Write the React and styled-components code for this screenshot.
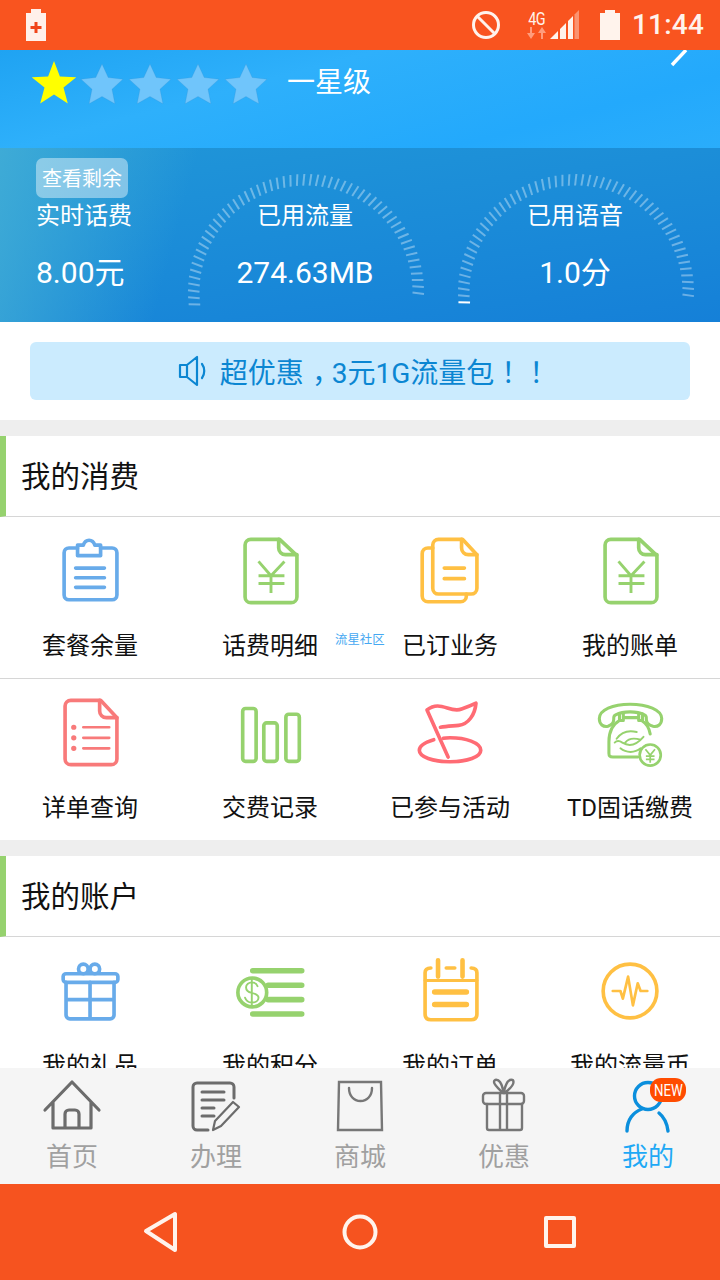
import React from 'react';
import styled, { createGlobalStyle } from 'styled-components';

const Global = createGlobalStyle`
  html, body { margin: 0; padding: 0; background: #fff; }
  body { font-family: Roboto, "Noto Sans CJK SC", sans-serif; }
  * { box-sizing: border-box; }
`;

const Phone = styled.div`
  width: 720px; height: 1280px; display: flex; flex-direction: column; overflow: hidden; background: #eee;
`;
const StatusBar = styled.header`
  height: 50px; flex: none; background: #F9541F; display: flex; align-items: center; justify-content: space-between; padding: 0 16px 0 26px;
`;
const StatusRight = styled.div`display: flex; align-items: center;`;
const FourG = styled.div`
  width: 20px; margin-left: 26px; display: flex; flex-direction: column; align-items: center; color: #FFF3EC;
`;
const FourGText = styled.span`
  font-size: 18px; line-height: 15px; height: 16px; transform: scaleX(.8); letter-spacing: -0.5px;
`;
const Clock = styled.span`
  font-size: 28px; font-weight: 500; color: #FFF3EC; margin-left: 12px; line-height: 50px; letter-spacing: .2px;
`;
const Content = styled.main`flex: 1; min-height: 0; overflow: hidden;`;

const Hero = styled.section`
  position: relative; height: 98px; display: flex; align-items: flex-start; padding: 10px 0 0 32px; gap: 4px;
  background: linear-gradient(165deg, #1FA3F2 0%, #2EB0FB 35%, #23A9FC 75%, #2AADFB 100%);
`;
const Grade = styled.span`
  color: #fff; font-size: 28px; line-height: 46px; margin-left: 15px;
`;
const Chevron = styled.svg`position: absolute; top: 0; right: 30px;`;

const Stats = styled.section`
  height: 174px; display: flex; align-items: stretch;
  background:
    linear-gradient(105deg, rgba(64,172,214,.95) 0, rgba(64,172,214,0) 26%),
    linear-gradient(172deg, #2096D8 0%, #1A8AD8 55%, #1580D8 100%);
`;
const StatFirst = styled.div`
  flex: none; width: 186px; padding: 10px 0 0 36px; display: flex; flex-direction: column; align-items: flex-start;
`;
const Remain = styled.div`
  width: 92px; height: 40px; border-radius: 7px; background: rgba(255,255,255,.42); color: #fff; font-size: 20px; line-height: 42px; text-align: center;
`;
const StatLabel = styled.div`color: #fff; font-size: 24px; line-height: 36px;`;
const StatValue = styled.div`color: #fff; font-size: 30px; line-height: 40px; margin-top: 19px;`;
const Gauge = styled.div`
  position: relative; flex: none; width: 238px; margin-right: 32px; padding-top: 50px; display: flex; flex-direction: column; align-items: center;
`;
const GaugeArc = styled.svg`position: absolute; left: 1px; top: 26px;`;

const NoticeBox = styled.section`background: #fff; padding: 20px 30px; height: 98px;`;
const Notice = styled.div`
  height: 58px; border-radius: 6px; background: #CBEBFE; color: #0B86D2; font-size: 28px; display: flex; align-items: center; justify-content: center; gap: 10px; padding-left: 8px;
`;
const Punct = styled.span`font-family: "Noto Sans CJK TC", sans-serif;`;
const Comma = styled.span`display: inline-block; transform: translateX(.3em);`;

const Section = styled.section`background: #fff; margin-top: 16px;`;
const SectionHead = styled.h2`
  margin: 0; height: 81px; border-left: 6px solid #96D26E; border-bottom: 1px solid #D6D6D6; padding-left: 15px;
  font-weight: 400; font-size: 29.5px; line-height: 83px; color: #111; position: relative;
`;
const Row = styled.div`
  position: relative; display: grid; grid-template-columns: repeat(4, 180px); height: ${p => p.$last ? '161px' : '162px'}; border-bottom: ${p => p.$last ? '0' : '1px solid #D6D6D6'};
`;
const Item = styled.div`display: flex; flex-direction: column; align-items: center; padding-top: 14px;`;
const ItemLabel = styled.span`
  font-size: 24px; line-height: 34px; margin-top: 18px; color: #111; white-space: nowrap;
`;
const Mark = styled.span`
  position: absolute; left: 335px; top: 115px; font-size: 12.4px; line-height: 16px; color: #45A8F2; white-space: nowrap;
`;
const Icon = styled.svg`
  display: block; fill: none; stroke: ${p => p.$c}; stroke-width: ${p => p.$w || 3.8}px; stroke-linecap: round; stroke-linejoin: round;
`;

const TabBar = styled.nav`
  height: 116px; flex: none; background: #F5F5F5; display: grid; grid-template-columns: repeat(5, 144px);
`;
const Tab = styled.div`
  position: relative; display: flex; flex-direction: column; align-items: center; padding-top: 10px;
`;
const TabLabel = styled.span`
  font-size: 26px; line-height: 32px; margin-top: 7px; color: ${p => p.$on ? '#1FA9F5' : '#A0A0A0'};
`;
const Badge = styled.span`
  position: absolute; left: 74px; top: 10px; width: 36px; height: 24px; border-radius: 11px; background: #FF4C00; color: #fff;
  font-size: 17px; line-height: 25px; text-align: center;
`;
const BadgeText = styled.span`display: inline-block; transform: scaleX(.78); margin-left: -6px; margin-right: -6px;`;

const NavBar = styled.footer`
  height: 96px; flex: none; background: #F6531F; display: grid; grid-template-columns: repeat(3, 200px); justify-content: center; align-items: center; justify-items: center;
`;

const C = { blue: '#68ABEA', green: '#96D26E', orange: '#FFC043', red: '#F87A7A', flag: '#FF6B74', grey: '#6C6C6C', bag: '#777', act: '#0B8FDD' };
const I = ({ c, w, children, size = 80, h }) => (
  <Icon $c={c} $w={w} width={size} height={h || size} viewBox={`0 0 ${size} ${h || size}`}>
    {size === 80 ? <g transform="translate(41 40) scale(.96) translate(-41 -40)">{children}</g> : children}
  </Icon>
);

const Clip = () => (
  <I c={C.blue}>
    <path d="M27 16H18a5 5 0 0 0-5 5v44a5 5 0 0 0 5 5h45a5 5 0 0 0 5-5V21a5 5 0 0 0-5-5H51" />
    <path d="M27 24V13h6c1-3 3-5 6-5s5 2 6 5h6v11z" />
    <path d="M25 37h30M25 47h30M25 57h30" />
  </I>
);
const YuanDoc = () => (
  <I c={C.green}>
    <path d="M20 7h30l18 17v43a6 6 0 0 1-6 6H20a6 6 0 0 1-6-6V13a6 6 0 0 1 6-6z" />
    <path d="M49 7v9a7 7 0 0 0 7 7h12" />
    <path d="M28 30l13 15 14-15M41 45v18M28 45h27M28 53h27" strokeLinecap="butt" strokeWidth="3" />
  </I>
);
const Stack = () => (
  <I c={C.orange}>
    <path d="M28 7h25l15 16v35a6 6 0 0 1-6 6H28a6 6 0 0 1-6-6V13a6 6 0 0 1 6-6z" />
    <path d="M52 7v9a7 7 0 0 0 7 7h9" />
    <path d="M22 16h-5a6 6 0 0 0-6 6v44a6 6 0 0 0 6 6h34a6 6 0 0 0 6-6v-2" />
    <path d="M34 37h21M34 48h21" />
  </I>
);
const ListDoc = () => (
  <I c={C.red}>
    <path d="M20 6h31l17 18v43a6 6 0 0 1-6 6H20a6 6 0 0 1-6-6V12a6 6 0 0 1 6-6z" />
    <path d="M50 6v11a7 7 0 0 0 7 7h11" />
    <path d="M33 34h27M33 45h27M33 56h27" strokeWidth="2.8" />
    <path d="M23 34h.1M23 45h.1M23 56h.1" strokeWidth="5.4" />
  </I>
);
const Bars = () => (
  <I c={C.green}>
    <rect x="11.500" y="14.500" width="14" height="55" rx="3" />
    <rect x="33.500" y="29.500" width="14" height="40" rx="3" />
    <rect x="56.500" y="20.500" width="14" height="49" rx="3" />
  </I>
);
const Flag = () => (
  <I c={C.flag}>
    <path d="M38 65L16 16C30 5 40 20 52 15c6-2 11-4 15-6-1 12-8 22-18 23-7 .7-13 1-19 2" />
    <path d="M23 47C13 50 8 54 8 58c0 7 14 12 32 12s32-5 32-12c0-8-16-13-32-13-3 0-5 0-7 .5" />
  </I>
);
const Phone2 = () => (
  <I c={C.green} w={3.2}>
    <path d="M17 33c-5 1-9-2-9-8 0-9 14-15 32-15s33 6 33 15c0 6-4 9-9 8-4-1-7-3-7-7 0-3 0-4-2-5-4-2-9-3-15-3s-11 1-15 3c-2 1-2 2-2 5 0 4-3 6-6 7z" />
    <path d="M29 20v7h4v-7M49 20v7h4v-7M33 24h16" />
    <path d="M29 27c-7 4-11 12-11 22v12c0 3 1 4 4 4h26M52 27c5 3 8 8 9 14" />
    <path d="M26 46c5-7 13-9 21-7M24 50c2-2 5-2 8 0 8 5 16 1 22-6M30 56c6 5 15 5 21 0M35 50c3-4 9-5 16-3" strokeWidth="2" />
    <circle cx="61" cy="63" r="11" strokeWidth="2.8" />
    <path d="M56 57l5 6 5-6M61 63v8M56.500 64h9M56.500 67.500h9" strokeWidth="1.8" strokeLinecap="butt" />
  </I>
);
const Gift = () => (
  <I c={C.blue}>
    <circle cx="33" cy="17" r="5" /><circle cx="45" cy="17" r="5" />
    <rect x="12" y="22" width="57" height="9" rx="3" />
    <path d="M15 31v34a4 4 0 0 0 4 4h42a4 4 0 0 0 4-4V31M40 31v38M15 49h50" />
  </I>
);
const Coins = () => (
  <I c={C.green}>
    <path d="M22 19h51M38 34h35M38 49h35M22 64h51" strokeWidth="5.800" />
    <circle cx="21.500" cy="41.500" r="15" />
    <path d="M27 35c-1-3-3-4-6-4s-6 2-6 5 2 5 6 6 7 2 7 5-3 5-7 5-6-2-7-5M21 27v29" strokeWidth="2" />
  </I>
);
const Calendar = () => (
  <I c={C.orange}>
    <path d="M20 16c-4 0-6 2-6 5v43c0 4 2 6 6 6h42c4 0 6-2 6-6V21c0-3-2-5-6-5" />
    <path d="M14 29h54" strokeWidth="3" />
    <path d="M27.500 8v17M53 8v17" strokeWidth="4.800" />
    <path d="M36 16h9" strokeWidth="3.600" />
    <path d="M24 41h33M24 54h33" strokeWidth="5.800" />
  </I>
);
const Pulse = () => (
  <I c={C.orange}>
    <circle cx="40" cy="40" r="28" />
    <path d="M22 40h8l2.500 8L38 25l5 30 5-23 3 8h7" strokeWidth="2.800" />
  </I>
);

const THome = () => (
  <I c={C.grey} size={64} h={56} w={3.2}>
    <path d="M5 32L32 4l27 28M13 24v26h38V24M25 50V36a4 4 0 0 1 4-4h6a4 4 0 0 1 4 4v14" />
  </I>
);
const TEdit = () => (
  <I c={C.grey} size={64} h={56} w={3}>
    <path d="M50 20V9a4 4 0 0 0-4-4H13a4 4 0 0 0-4 4v39a4 4 0 0 0 4 4h11" />
    <path d="M18 14h22M18 22h22M18 30h12M18 38h12" />
    <path d="M29 52l2-9 18-19 6 5-18 19z" strokeWidth="2.200" />
  </I>
);
const TBag = () => (
  <I c={C.bag} size={64} h={56} w={2.4}>
    <path d="M11 4h42l1 48H10z" strokeLinejoin="miter" />
    <path d="M21 10c0 8 5 13 11.500 13S44 18 44 10" />
  </I>
);
const TGift = () => (
  <I c={C.bag} size={64} h={56} w={2.4}>
    <rect x="11" y="15" width="41" height="11" rx="3" />
    <path d="M15 26v24a2 2 0 0 0 2 2h31a2 2 0 0 0 2-2V26M28 15v37M35 15v37" />
    <path d="M31 15c-3-3-9-8-9-11s4-3 6 0 3 7 3.500 11c1-4 2-8 4-11s6-3 6 0-5 8-9 11" />
  </I>
);
const TUser = () => (
  <I c={C.act} size={64} h={56} w={3.4}>
    <circle cx="32" cy="18" r="13.500" />
    <path d="M11 53c0-11 6-19 15-22M43 35c5 4 8 10 9 18" />
  </I>
);

const Star = ({ on }) => {
  const R = on ? 23.5 : 22, r = on ? 10 : 10.5, cx = 22, cy = on ? 24.5 : 26;
  const pts = Array.from({ length: 10 }, (_, i) => {
    const a = -Math.PI / 2 + i * Math.PI / 5, d = i % 2 ? r : R;
    return `${(cx + d * Math.cos(a)).toFixed(1)},${(cy + d * Math.sin(a)).toFixed(1)}`;
  }).join(' ');
  return <svg width="44" height="44" viewBox="0 0 44 44" style={{ flex: 'none' }}><polygon points={pts} fill={on ? '#FFFF00' : '#70C5FB'} stroke={on ? 'none' : 'rgba(60,140,200,.35)'} strokeWidth=".6" /></svg>;
};

const Arc = ({ start, end, mark }) => {
  const ticks = [];
  for (let a = start, i = 0; a >= end; a -= 3.4, i++) {
    const o = a * Math.PI / 180, n = (a + 0.7) * Math.PI / 180;
    ticks.push(
      <line key={i}
        x1={119 + 118 * Math.cos(o)} y1={118 - 118 * Math.sin(o)}
        x2={119 + 106.5 * Math.cos(n)} y2={118 - 106.5 * Math.sin(n)}
        stroke={mark && i === 0 ? '#fff' : 'rgba(255,255,255,.36)'} strokeWidth="2" />
    );
  }
  return <GaugeArc width="238" height="134" viewBox="0 0 238 134">{ticks}</GaugeArc>;
};

const rows1 = [
  [['套餐余量', Clip], ['话费明细', YuanDoc], ['已订业务', Stack], ['我的账单', YuanDoc]],
  [['详单查询', ListDoc], ['交费记录', Bars], ['已参与活动', Flag], ['TD固话缴费', Phone2]],
];
const rows2 = [['我的礼品', Gift], ['我的积分', Coins], ['我的订单', Calendar], ['我的流量币', Pulse]];
const tabs = [['首页', THome], ['办理', TEdit], ['商城', TBag], ['优惠', TGift], ['我的', TUser, true]];

const Cells = ({ list }) => list.map(([t, Ic]) => (
  <Item key={t}><Ic /><ItemLabel>{t}</ItemLabel></Item>
));

export default function App() {
  return (
    <Phone>
      <Global />
      <StatusBar>
        <svg width="20" height="32" viewBox="0 0 20 32">
          <path d="M5 0h10v4h5v28H0V4h5z" fill="#FFF0EA" />
          <path d="M8.500 13h3v4h4v3h-4v4h-3v-4h-4v-3h4z" fill="#F0441A" />
        </svg>
        <StatusRight>
          <svg width="30" height="30" viewBox="0 0 30 30" fill="none" stroke="#FFF3EC" strokeWidth="3">
            <circle cx="15" cy="15" r="12.500" /><path d="M6 6l18 18" />
          </svg>
          <FourG>
            <FourGText>4G</FourGText>
            <svg width="20" height="12" viewBox="0 0 20 12" fill="#FF9C7C">
              <path d="M3 0h2v6h3l-4 6-4-6h3zM14 12h2V6h3l-4-6-4 6h3z" />
            </svg>
          </FourG>
          <svg width="30" height="30" viewBox="0 0 30 30" style={{ marginLeft: 3 }}>
            <path d="M0 29l8-8v8zM10 29V19l6-6v16zM18 29V11l5-5v23z" fill="#FFF3EC" />
            <path d="M24.500 29V4.500L29 0v29z" fill="#FFF3EC" opacity=".4" />
          </svg>
          <svg width="20" height="30" viewBox="0 0 20 30" style={{ marginLeft: 20 }}>
            <path d="M5 0h10v3h5v27H0V3h5z" fill="#FFF3EC" />
          </svg>
          <Clock>11:44</Clock>
        </StatusRight>
      </StatusBar>
      <Content>
        <Hero>
          {[true, false, false, false, false].map((on, i) => <Star key={i} on={on} />)}
          <Grade>一星级</Grade>
          <Chevron width="24" height="18" viewBox="0 0 24 18">
            <path d="M20 0L6 15" stroke="#fff" strokeWidth="3.400" fill="none" />
          </Chevron>
        </Hero>
        <Stats>
          <StatFirst>
            <Remain>查看剩余</Remain>
            <StatLabel>实时话费</StatLabel>
            <StatValue>8.00元</StatValue>
          </StatFirst>
          <Gauge>
            <Arc start={186} end={-3.500} />
            <StatLabel>已用流量</StatLabel>
            <StatValue>274.63MB</StatValue>
          </Gauge>
          <Gauge>
            <Arc start={185} end={-3.500} mark />
            <StatLabel>已用语音</StatLabel>
            <StatValue>1.0分</StatValue>
          </Gauge>
        </Stats>
        <NoticeBox>
          <Notice>
            <svg width="32" height="32" viewBox="0 0 32 32" fill="none" stroke="#0B86D2" strokeWidth="2.200" strokeLinejoin="round" strokeLinecap="round">
              <path d="M2 10h7l10-8v28l-10-8H2zM9 10v12M24 9c3 4 3 10 0 14" />
            </svg>
            <span>超优惠<Comma>，</Comma>3元1G流量包<Punct>！！</Punct></span>
          </Notice>
        </NoticeBox>
        <Section>
          <SectionHead>我的消费</SectionHead>
          <Row><Cells list={rows1[0]} /><Mark>流星社区</Mark></Row>
          <Row $last><Cells list={rows1[1]} /></Row>
        </Section>
        <Section>
          <SectionHead>我的账户</SectionHead>
          <Row $last><Cells list={rows2} /></Row>
        </Section>
      </Content>
      <TabBar>
        {tabs.map(([t, Ic, on]) => (
          <Tab key={t}>
            <Ic />
            <TabLabel $on={on}>{t}</TabLabel>
            {on && <Badge><BadgeText>NEW</BadgeText></Badge>}
          </Tab>
        ))}
      </TabBar>
      <NavBar>
        <svg width="40" height="44" viewBox="0 0 40 44" fill="none" stroke="#FFF3EC" strokeWidth="4" strokeLinejoin="round">
          <path d="M6 21L35 4v36z" />
        </svg>
        <svg width="40" height="40" viewBox="0 0 40 40" fill="none" stroke="#FFF3EC" strokeWidth="4">
          <circle cx="20" cy="20" r="15.500" />
        </svg>
        <svg width="40" height="40" viewBox="0 0 40 40" fill="none" stroke="#FFF3EC" strokeWidth="4" strokeLinejoin="round">
          <rect x="6" y="6" width="28" height="28" />
        </svg>
      </NavBar>
    </Phone>
  );
}
